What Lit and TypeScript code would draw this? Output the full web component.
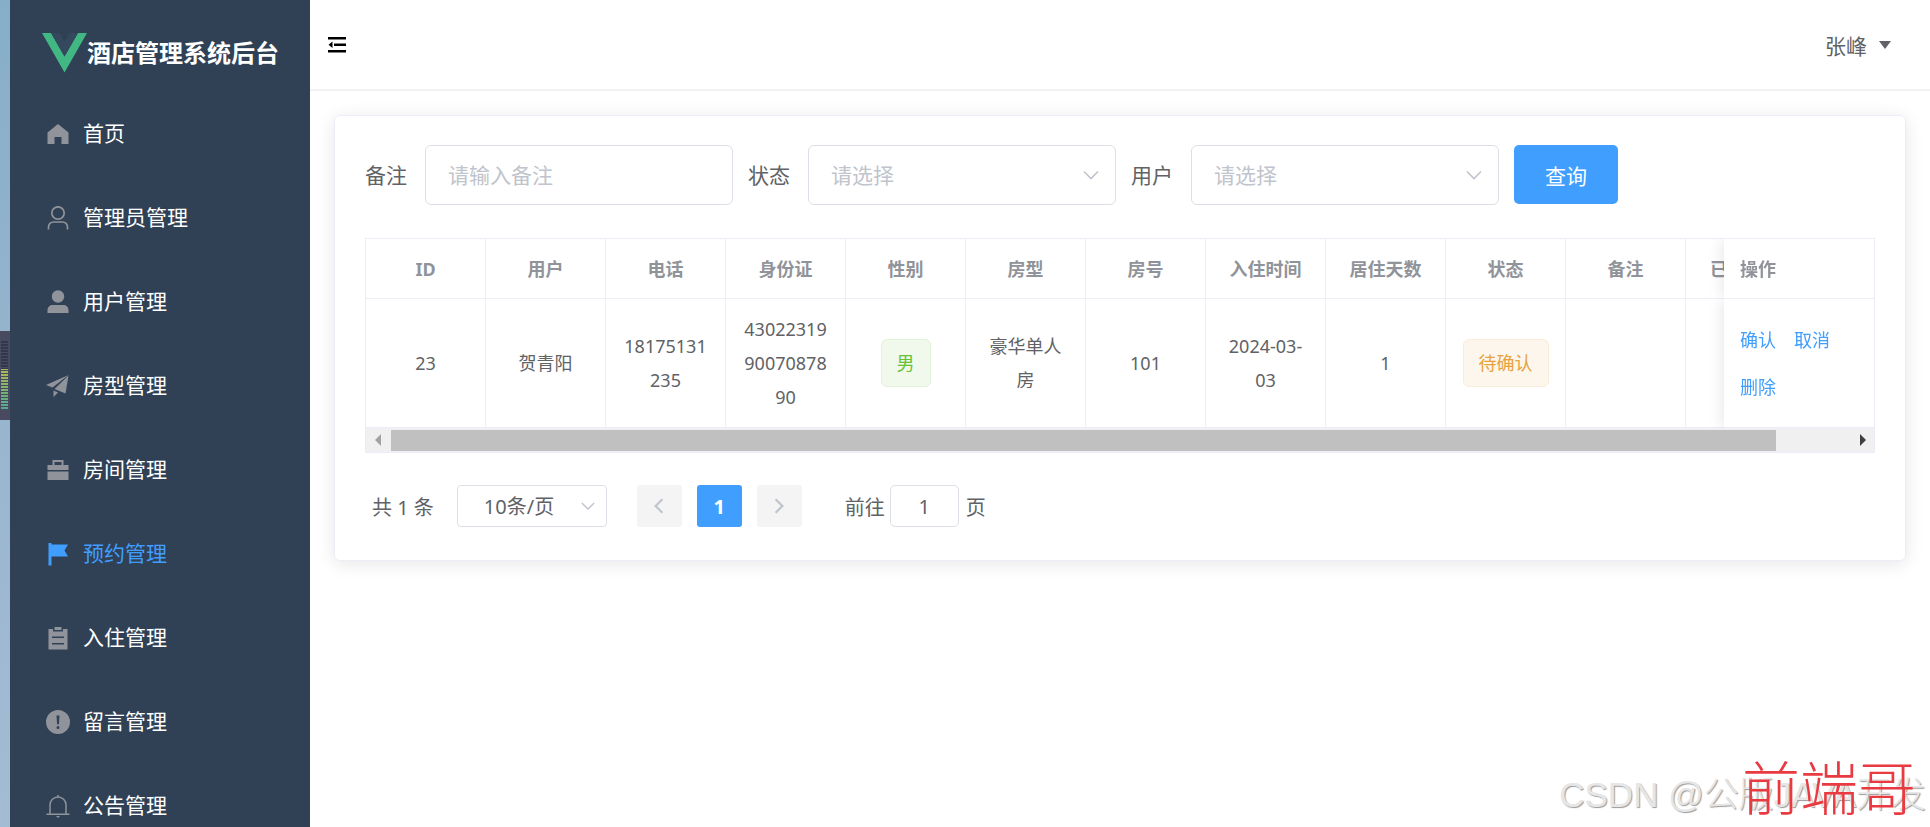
import { LitElement, html, css, svg } from "lit";
import { customElement, state } from "lit/decorators.js";
import { classMap } from "lit/directives/class-map.js";

interface MenuItem {
  label: string;
  icon: unknown;
}

const MENU: MenuItem[] = [
  { label: "首页", icon: svg`<path d="M1.5 10.5 12 2l10.500 8.500V22h-7v-7h-7v7h-7z"/>` },
  {
    label: "管理员管理",
    icon: svg`<g fill="none" stroke="currentColor" stroke-width="1.700"><circle cx="12" cy="7" r="6.200"/><path d="M2.500 23.500V21a5 5 0 0 1 5-5h9a5 5 0 0 1 5 5v2.500"/></g>`,
  },
  { label: "用户管理", icon: svg`<circle cx="12" cy="6.500" r="6.200"/><path d="M1.500 23v-3a5 5 0 0 1 5-5h11a5 5 0 0 1 5 5v3z"/>` },
  { label: "房型管理", icon: svg`<path d="M0 11 22.500 1 6.500 13.500zM22.500 1.500 19.500 19.500 8.500 15zM7.500 16.500l4.500 2-4.500 4.500z"/>` },
  {
    label: "房间管理",
    icon: svg`<path d="M6.500 7V2h11v5h5v5h-21V7zM8.500 7h7V4h-7z" fill-rule="evenodd"/><path d="M1.500 13.500h21V22h-21z"/>`,
  },
  { label: "预约管理", icon: svg`<path d="M2.500 1h3v1.500H22l-3.500 6 3.500 6H5.500V23.500h-3z"/>` },
  {
    label: "入住管理",
    icon: svg`<path fill-rule="evenodd" d="M2.500 3H7v2.500h10V3h4.500v20.500h-19zM6 10.500v1.500h12v-1.500zM6 17v1.500h12V17z"/><path d="M8.500 1h7v3h-7z"/>`,
  },
  {
    label: "留言管理",
    icon: svg`<path fill-rule="evenodd" d="M12 0a12 12 0 1 1 0 24 12 12 0 0 1 0-24zM10.500 5.500l.6 8.700h1.800l.6-8.700zM12 16a1.500 1.500 0 1 0 0 3 1.500 1.500 0 0 0 0-3z"/>`,
  },
  {
    label: "公告管理",
    icon: svg`<g fill="none" stroke="currentColor" stroke-width="1.500"><path d="M4 20v-9a8 8 0 0 1 16 0v9M.5 20.200h23M12 1v2"/></g><path d="M10 22h4l-2 2z"/>`,
  },
];

const COLUMNS = ["ID", "用户", "电话", "身份证", "性别", "房型", "房号", "入住时间", "居住天数", "状态", "备注"];

const chevron = (d: string) => html`<svg class="chevron" viewBox="0 0 16 16" aria-hidden="true"><path d=${d} /></svg>`;
const DOWN = "M1 4.500 8 11.500 15 4.500";
const LEFT = "M11 2 5 8 11 14";
const RIGHT = "M5 2 11 8 5 14";

@customElement("side-menu")
export class SideMenu extends LitElement {
  @state() private active = "预约管理";

  static styles = css`
    :host {
      display: block;
      background: #304156;
      overflow: hidden;
    }
    .brand {
      display: flex;
      align-items: center;
      height: 92px;
      padding: 14px 0 0 32px;
      box-sizing: border-box;
      color: #fff;
      font-size: 24px;
      font-weight: 700;
      line-height: 36px;
      white-space: nowrap;
    }
    .logo {
      width: 45px;
      height: 40px;
      flex: none;
    }
    .item {
      display: flex;
      align-items: center;
      gap: 13px;
      height: 84px;
      padding-left: 36px;
      color: #fff;
      font-size: 21px;
      line-height: 28px;
      text-decoration: none;
    }
    .icon {
      width: 24px;
      height: 24px;
      fill: currentColor;
      color: #909399;
      flex: none;
    }
    .text {
      padding-bottom: 2px;
    }
    .item.active,
    .item.active .icon {
      color: #409eff;
    }
  `;

  render() {
    return html`
      <div class="brand">
        <svg class="logo" viewBox="0 0 45 40" aria-hidden="true">
          <path fill="#41b883" d="M0 0h9l13.500 23.500L36 0h9L22.500 39.500z" />
          <path fill="#35495e" d="M9 0h8.500l5 9 5-9H36L22.500 23.500z" />
        </svg>
        <span>酒店管理系统后台</span>
      </div>
      <nav>
        ${MENU.map(
          (m) => html`<a
            class=${classMap({ item: true, active: m.label === this.active })}
            href="#"
            @click=${(e: Event) => {
              e.preventDefault();
              this.active = m.label;
            }}
            ><svg class="icon" viewBox="0 0 24 24" aria-hidden="true">${m.icon}</svg><span class="text">${m.label}</span></a
          >`,
        )}
      </nav>
    `;
  }
}

@customElement("booking-table")
export class BookingTable extends LitElement {
  static styles = css`
    :host {
      display: block;
      border: 1px solid #ebeef5;
      color: #606266;
      font-size: 18px;
      line-height: 34px;
    }
    .viewport {
      overflow: hidden;
    }
    table {
      width: 1590px;
      table-layout: fixed;
      border-collapse: separate;
      border-spacing: 0;
    }
    .col {
      width: 120px;
    }
    .col-ops {
      width: 150px;
    }
    th,
    td {
      box-sizing: border-box;
      padding: 13px 15px;
      border-right: 1px solid #ebeef5;
      border-bottom: 1px solid #ebeef5;
      text-align: center;
      word-break: break-all;
      background: #fff;
    }
    th {
      height: 60px;
      padding: 12px 15px;
      color: #909399;
      font-weight: 700;
    }
    .date {
      word-break: normal;
    }
    .clipped {
      text-align: left;
      padding-left: 24px;
    }
    .ops {
      position: sticky;
      right: 0;
      text-align: left;
      padding-left: 16px;
      border-right: 0;
      box-shadow: 0 0 15px rgba(0, 0, 0, 0.12);
      clip-path: inset(0 0 0 -20px);
    }
    .links {
      display: flex;
      flex-wrap: wrap;
      gap: 13px 18px;
    }
    .links a {
      color: #409eff;
      text-decoration: none;
    }
    .tag {
      display: inline-block;
      box-sizing: border-box;
      height: 48px;
      padding: 0 15px;
      border: 1px solid #e1f3d8;
      border-radius: 6px;
      background: #f0f9eb;
      color: #67c23a;
      line-height: 46px;
      vertical-align: middle;
      white-space: nowrap;
    }
    .tag.warning {
      margin: 0 -1px;
      border-color: #faecd8;
      background: #fdf6ec;
      color: #e6a23c;
    }
    .scrollbar {
      display: flex;
      align-items: center;
      height: 24px;
      background: #f0f0f0;
    }
    .arrow {
      width: 25px;
      height: 12px;
      flex: none;
      fill: #a3a3a3;
    }
    .arrow.next {
      fill: #404040;
    }
    .track {
      flex: 1;
    }
    .thumb {
      width: 95%;
      height: 21px;
      background: #c0c0c0;
    }
  `;

  render() {
    return html`
      <div class="viewport">
        <table>
          <colgroup>
            ${COLUMNS.map(() => html`<col class="col" />`)}
            <col class="col" />
            <col class="col-ops" />
          </colgroup>
          <thead>
            <tr>
              ${COLUMNS.map((c) => html`<th scope="col">${c}</th>`)}
              <th scope="col" class="clipped">已</th>
              <th scope="col" class="ops">操作</th>
            </tr>
          </thead>
          <tbody>
            <tr>
              <td>23</td>
              <td>贺青阳</td>
              <td>18175131235</td>
              <td>430223199007087890</td>
              <td><span class="tag">男</span></td>
              <td>豪华单人房</td>
              <td>101</td>
              <td class="date">2024-03-03</td>
              <td>1</td>
              <td><span class="tag warning">待确认</span></td>
              <td></td>
              <td></td>
              <td class="ops">
                <div class="links"><a href="#">确认</a><a href="#">取消</a><a href="#">删除</a></div>
              </td>
            </tr>
          </tbody>
        </table>
      </div>
      <div class="scrollbar" aria-hidden="true">
        <svg class="arrow" viewBox="0 0 25 12"><path d="M15 0v12l-6-6z" /></svg>
        <div class="track"><div class="thumb"></div></div>
        <svg class="arrow next" viewBox="0 0 25 12"><path d="M11 0v12l6-6z" /></svg>
      </div>
    `;
  }
}

@customElement("app-root")
export class AppRoot extends LitElement {
  static styles = css`
    :host {
      display: grid;
      grid-template-columns: 10px 300px minmax(0, 1fr);
      height: 100vh;
      overflow: hidden;
      background: #fff;
      color: #606266;
      font-family: "Noto Sans", "Noto Sans CJK SC", sans-serif;
      font-size: 21px;
    }
    input,
    select,
    button {
      box-sizing: border-box;
      margin: 0;
      font: inherit;
      color: inherit;
    }
    .desktop {
      display: flex;
      align-items: center;
      background: linear-gradient(#86aec8, #9bb6d0 60%, #a3bcd4);
    }
    .meter {
      width: 10px;
      height: 89px;
      margin-bottom: 77px;
      padding: 10px 2px 10px 1px;
      box-sizing: border-box;
      background: #484b60;
    }
    .bars {
      height: 69px;
      background:
        repeating-linear-gradient(transparent 0 2px, #484b60 2px 3px),
        linear-gradient(#33374d 0 40%, #b3b955 40%, #86b46a 65%, #4fa896);
    }
    .topbar {
      display: flex;
      align-items: center;
      justify-content: space-between;
      height: 91px;
      box-sizing: border-box;
      padding: 0 37px 0 17px;
      border-bottom: 2px solid #f2f2f2;
    }
    .fold,
    .user {
      display: flex;
      align-items: center;
      gap: 10px;
      padding: 0;
      border: 0;
      background: none;
    }
    .fold svg {
      width: 20px;
      height: 20px;
    }
    .user svg {
      width: 16px;
      height: 10px;
      fill: #606266;
    }
    .card {
      margin: 24px 24px 0 24px;
      padding: 29px 30px 33px 30px;
      border: 1px solid #ebeef5;
      border-radius: 6px;
      box-shadow: 0 3px 18px rgba(0, 0, 0, 0.1);
    }
    .filters {
      display: flex;
      align-items: flex-start;
      gap: 15px;
      margin-bottom: 33px;
    }
    .field {
      display: flex;
      align-items: center;
      gap: 18px;
      line-height: 30px;
      white-space: nowrap;
    }
    .box {
      position: relative;
      display: flex;
      align-items: center;
    }
    .control {
      width: 308px;
      height: 60px;
      padding: 0 22px;
      border: 1px solid #dcdfe6;
      border-radius: 6px;
      background: #fff;
      outline: none;
      appearance: none;
    }
    select.control {
      color: #c0c4cc;
    }
    .control::placeholder {
      color: #c0c4cc;
      opacity: 1;
    }
    .chevron {
      width: 16px;
      height: 16px;
      fill: none;
      stroke: #c0c4cc;
      stroke-width: 1.600;
    }
    .box .chevron {
      position: absolute;
      right: 17px;
      pointer-events: none;
    }
    .query {
      height: 59px;
      padding: 0 31px;
      border: 0;
      border-radius: 5px;
      background: #409eff;
      color: #fff;
    }
    .pager {
      display: flex;
      align-items: center;
      margin-top: 32px;
      padding-left: 7px;
      gap: 15px;
      font-size: 20px;
      white-space: nowrap;
    }
    .total {
      margin-right: 8px;
    }
    .size {
      width: 150px;
      height: 42px;
      padding: 0 26px;
      border: 1px solid #dcdfe6;
      border-radius: 4px;
      background: #fff;
      appearance: none;
    }
    .pager .chevron {
      width: 14px;
      height: 14px;
    }
    .box.sizes {
      margin-right: 15px;
    }
    .box.sizes .chevron {
      right: 12px;
    }
    .page {
      display: flex;
      align-items: center;
      justify-content: center;
      width: 45px;
      height: 42px;
      padding: 0;
      border: 0;
      border-radius: 3px;
      background: #f4f4f5;
      font-weight: 700;
    }
    .page .chevron {
      width: 18px;
      height: 18px;
      stroke-width: 2;
    }
    .page.current {
      background: #409eff;
      color: #fff;
    }
    .jump {
      display: flex;
      align-items: center;
      gap: 5px;
      margin-left: 28px;
    }
    .jump input {
      width: 69px;
      height: 42px;
      padding: 0;
      border: 1px solid #dcdfe6;
      border-radius: 5px;
      text-align: center;
    }
    .jump .unit {
      margin-left: 2px;
    }
    .credit {
      position: absolute;
      right: 4px;
      bottom: 4px;
      color: #e6e6e6;
      font-size: 35px;
      line-height: 56px;
      white-space: nowrap;
      text-shadow: 1px 1px 1px #999;
      font-family: "Liberation Sans", "Noto Sans CJK SC", sans-serif;
      font-weight: 300;
    }
    .stamp {
      position: absolute;
      right: 14px;
      bottom: 0;
      color: #e83a40;
      font-family: "Noto Sans CJK SC", serif;
      font-size: 58px;
      font-weight: 300;
      line-height: 84px;
      white-space: nowrap;
    }
  `;

  render() {
    return html`
      <div class="desktop" aria-hidden="true">
        <div class="meter"><div class="bars"></div></div>
      </div>
      <side-menu></side-menu>
      <main>
        <header class="topbar">
          <button class="fold" aria-label="折叠菜单">
            <svg viewBox="0 0 20 20" aria-hidden="true">
              <path d="M1 2h18v2.500H1zM7 8.500h12V11H7zM1 15h18v2.500H1zM5.500 6.500v6.500L1.500 9.800z" />
            </svg>
          </button>
          <button class="user">
            张峰<svg viewBox="0 0 16 10" aria-hidden="true"><path d="M2 1h12L8 9z" /></svg>
          </button>
        </header>
        <section class="card">
          <form class="filters" @submit=${(e: Event) => e.preventDefault()}>
            <div class="field">
              <label for="remark">备注</label>
              <input id="remark" class="control" placeholder="请输入备注" />
            </div>
            <div class="field">
              <label for="status">状态</label>
              <div class="box">
                <select id="status" class="control">
                  <option>请选择</option>
                </select>
                ${chevron(DOWN)}
              </div>
            </div>
            <div class="field">
              <label for="guest">用户</label>
              <div class="box">
                <select id="guest" class="control">
                  <option>请选择</option>
                </select>
                ${chevron(DOWN)}
              </div>
            </div>
            <button class="query">查询</button>
          </form>
          <booking-table></booking-table>
          <div class="pager">
            <span class="total">共 1 条</span>
            <div class="box sizes">
              <select class="size" aria-label="每页条数">
                <option>10条/页</option>
              </select>
              ${chevron(DOWN)}
            </div>
            <button class="page" aria-label="上一页" disabled>${chevron(LEFT)}</button>
            <button class="page current">1</button>
            <button class="page" aria-label="下一页" disabled>${chevron(RIGHT)}</button>
            <div class="jump">
              <label for="goto">前往</label>
              <input id="goto" value="1" />
              <span class="unit">页</span>
            </div>
          </div>
        </section>
      </main>
      <div class="credit">CSDN @公版JAVA开发</div>
      <div class="stamp">前端哥</div>
    `;
  }
}
